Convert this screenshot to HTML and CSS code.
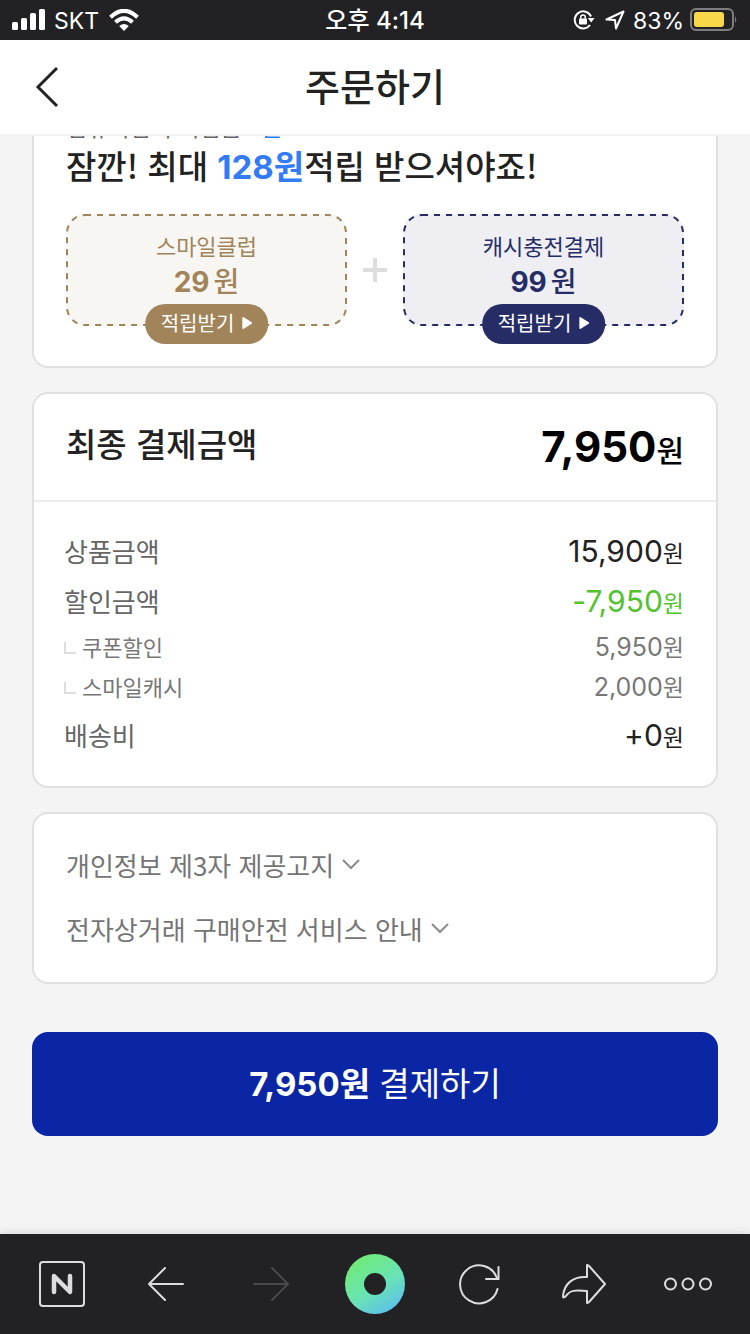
FILE: index.html
```html
<!DOCTYPE html>
<html lang="ko">
<head>
<meta charset="utf-8">
<meta name="viewport" content="width=device-width, initial-scale=1">
<title>주문하기</title>
<link rel="stylesheet" href="styles.css">
</head>
<body>
<div class="status">
  <div class="status-side">
    <svg width="34" height="22" viewBox="0 0 34 22" fill="#fff"><rect x="0" y="13" width="6" height="8" rx="1.5"/><rect x="9" y="9" width="6" height="12" rx="1.5"/><rect x="18" y="4" width="6" height="17" rx="1.5"/><rect x="27" y="0" width="6" height="21" rx="1.5"/></svg>
    <span class="carrier">SKT</span>
    <svg class="wifi" width="30" height="22" viewBox="0 0 30 22" fill="none" stroke="#fff" stroke-width="4"><path d="M1.500 8.200Q15-4.600 28.500 8.200"/><path d="M6.500 13.300Q15 5.500 23.500 13.300"/><path d="M10.200 17.100Q15 12.700 19.800 17.100L15 22Z" fill="#fff" stroke="none"/></svg>
  </div>
  <time class="clock">오후 4:14</time>
  <div class="status-side status-right">
    <svg width="22" height="20" viewBox="0 0 22 20" fill="none" stroke="#fff" stroke-width="2"><path d="M18 6.500A8.500 8.500 0 1 0 17 15"/><path d="M14.800 8h6.800l-3.400 4.600z" fill="#fff" stroke="none"/><rect x="6" y="8.500" width="8" height="6" rx="1" fill="#fff" stroke="none"/><path d="M7.700 9V7.300a2.300 2.300 0 0 1 4.600 0V9" stroke-width="1.500"/></svg>
    <svg class="locate" width="20" height="20" viewBox="0 0 20 20" fill="none" stroke="#fff" stroke-width="2" stroke-linejoin="round"><path d="M1.500 9.500L18.500 1.500L11 18.500L10 10Z"/></svg>
    <span class="percent">83%</span>
    <svg width="48" height="24" viewBox="0 0 48 24"><rect x="1" y="1" width="42" height="21" rx="5" fill="none" stroke="#7d7d80" stroke-width="2"/><rect x="4" y="4" width="30" height="15" rx="3" fill="#f8d84a"/><path d="M45 8q2.500 3.500 0 7z" fill="#7d7d80"/></svg>
  </div>
</div>
<header class="header">
  <button class="back" aria-label="뒤로"><svg width="24" height="42" viewBox="0 0 24 42" fill="none" stroke="#222" stroke-width="3"><path d="M22 2L3 21L22 40"/></svg></button>
  <h1 class="title">주문하기</h1>
</header>
<main class="content">
  <section class="card reward">
    <p class="earned">컴퓨터입니 적립금 <span class="blue">0원</span></p>
    <h2 class="headline">잠깐! 최대 <strong class="blue">128원</strong>적립 받으셔야죠!</h2>
    <div class="offers">
      <div class="offer gold">
        <svg class="dash" aria-hidden="true"><rect x="1" y="1" rx="18"/></svg>
        <p class="offer-name">스마일클럽</p>
        <p class="offer-value"><strong>29</strong>원</p>
        <button class="pill">적립받기<svg width="10" height="14" viewBox="0 0 10 14"><path d="M1 2L9 7L1 12Z" fill="#fff" stroke="#fff" stroke-width="2" stroke-linejoin="round"/></svg></button>
      </div>
      <svg class="plus" width="24" height="24" viewBox="0 0 24 24" stroke="#ddd" stroke-width="4"><path d="M12 0V24M0 12H24"/></svg>
      <div class="offer navy">
        <svg class="dash" aria-hidden="true"><rect x="1" y="1" rx="18"/></svg>
        <p class="offer-name">캐시충전결제</p>
        <p class="offer-value"><strong>99</strong>원</p>
        <button class="pill">적립받기<svg width="10" height="14" viewBox="0 0 10 14"><path d="M1 2L9 7L1 12Z" fill="#fff" stroke="#fff" stroke-width="2" stroke-linejoin="round"/></svg></button>
      </div>
    </div>
  </section>
  <section class="card">
    <div class="total">
      <h2 class="total-name">최종 결제금액</h2>
      <p class="total-value"><strong>7,950</strong>원</p>
    </div>
    <dl class="prices">
      <div class="row"><dt>상품금액</dt><dd><span class="num">15,900</span>원</dd></div>
      <div class="row green"><dt>할인금액</dt><dd><span class="num">-7,950</span>원</dd></div>
      <div class="row sub"><dt>쿠폰할인</dt><dd><span class="num">5,950</span>원</dd></div>
      <div class="row sub"><dt>스마일캐시</dt><dd><span class="num">2,000</span>원</dd></div>
      <div class="row last"><dt>배송비</dt><dd><span class="num">+0</span>원</dd></div>
    </dl>
  </section>
  <section class="card notices">
    <button class="notice">개인정보 제3자 제공고지<svg width="18" height="12" viewBox="0 0 18 12" fill="none" stroke="#8b8b8b" stroke-width="2"><path d="M1 1L9 9L17 1"/></svg></button>
    <button class="notice">전자상거래 구매안전 서비스 안내<svg width="18" height="12" viewBox="0 0 18 12" fill="none" stroke="#8b8b8b" stroke-width="2"><path d="M1 1L9 9L17 1"/></svg></button>
  </section>
  <button class="pay"><strong>7,950원</strong> 결제하기</button>
</main>
<nav class="toolbar">
  <button aria-label="네이버"><svg width="46" height="46" viewBox="0 0 46 46" fill="none" stroke="#ddd"><rect x="1" y="1" width="44" height="44" rx="3" stroke-width="2"/><path d="M15 31V15L31 31V15" stroke-width="4.500" stroke-linecap="round" stroke-linejoin="round"/></svg></button>
  <button aria-label="이전"><svg width="36" height="36" viewBox="0 0 36 36" fill="none" stroke="#ddd" stroke-width="2" stroke-linecap="round" stroke-linejoin="round"><path d="M17 2L1 18L17 34M1 18H35"/></svg></button>
  <button aria-label="다음" disabled><svg width="36" height="36" viewBox="0 0 36 36" fill="none" stroke="#49494b" stroke-width="2" stroke-linecap="round" stroke-linejoin="round"><path d="M19 2L35 18L19 34M1 18H35"/></svg></button>
  <button aria-label="홈"><svg width="60" height="60" viewBox="0 0 60 60"><defs><linearGradient id="ring" x1="0.200" y1="0" x2="0.850" y2="1"><stop offset="0" stop-color="#70ea70"/><stop offset="0.550" stop-color="#69e4b5"/><stop offset="1" stop-color="#5cb9f4"/></linearGradient></defs><circle cx="30" cy="30" r="30" fill="url(#ring)"/><circle cx="30" cy="30" r="11" fill="#222224"/></svg></button>
  <button aria-label="새로고침"><svg width="42" height="42" viewBox="0 0 42 42" fill="none" stroke="#ddd" stroke-width="2" stroke-linecap="round"><path d="M39.500 26A19 19 0 1 1 38.800 14.500L40 16"/><path d="M40.500 4V16H28"/></svg></button>
  <button aria-label="공유"><svg width="44" height="40" viewBox="0 0 44 40" fill="none" stroke="#ddd" stroke-width="2" stroke-linejoin="round"><path d="M25 13V1Q26.500 1 27.500 2.500L43 20L27.500 37.500Q26.500 39 25 39V27C13 26 8 26 4 32Q1 35 1 32C2 20 11 12 25 13Z"/></svg></button>
  <button aria-label="더보기"><svg width="48" height="14" viewBox="0 0 48 14" fill="none" stroke="#ddd" stroke-width="2"><circle cx="6.500" cy="7" r="5.500"/><circle cx="24" cy="7" r="5.500"/><circle cx="41.500" cy="7" r="5.500"/></svg></button>
</nav>
</body>
</html>
```
FILE: styles.css
```css
* { box-sizing: border-box; margin: 0; padding: 0; }
body {
  min-height: 100vh;
  display: flex;
  flex-direction: column;
  background: #f4f4f4;
  color: #222;
  font-family: "Noto Sans CJK KR", sans-serif;
}
button { font: inherit; color: inherit; background: none; border: 0; }
svg { display: block; flex: none; }

.status {
  height: 40px;
  flex: none;
  display: grid;
  grid-template-columns: 1fr auto 1fr;
  align-items: center;
  padding: 0 12px;
  background: #222224;
  color: #fff;
}
.status-side { display: flex; align-items: center; gap: 8px; }
.wifi { margin-left: 2px; }
.status-right { justify-content: flex-end; gap: 6px; }
.locate { margin-left: 4px; }
.carrier, .percent { padding-top: 2px; font: 23px/38px Inter, sans-serif; }
.percent { margin-left: 2px; }
.clock { padding-top: 2px; font: 500 24px/38px Inter, "Noto Sans CJK KR", sans-serif; }

.header {
  position: relative;
  z-index: 1;
  flex: none;
  height: 96px;
  display: grid;
  grid-template-columns: 1fr auto 1fr;
  align-items: center;
  padding: 0 35px;
  background: #fff;
  border-bottom: 2px solid #f2f2f2;
}
.back { justify-self: start; }
.title { padding-bottom: 4px; font-size: 38px; line-height: 56px; font-weight: 500; }

.content { flex: 1; display: flex; flex-direction: column; gap: 24px; padding: 0 32px; }
.card { background: #fff; border: 2px solid #e0e0e0; border-radius: 16px; }

.reward { margin-top: -26px; padding: 0 32px 40px; border-top: 0; border-radius: 0 0 16px 16px; }
.earned { font-size: 23px; line-height: 32px; color: #666; }
.headline { font-size: 33px; line-height: 46px; font-weight: 500; }
.blue { color: #347cf7; }
.headline .blue, .offer-value strong, .pay strong { font-family: Inter, "Noto Sans CJK KR", sans-serif; font-weight: 700; line-height: 1; }
.offers { display: flex; align-items: center; gap: 16px; margin-top: 26px; }
.offer {
  position: relative;
  flex: 1;
  height: 112px;
  padding-top: 14px;
  border-radius: 18px;
  text-align: center;
}
.dash { position: absolute; inset: 0; width: 100%; height: 100%; }
.dash rect { width: calc(100% - 2px); height: calc(100% - 2px); fill: none; stroke: currentColor; stroke-width: 2; stroke-dasharray: 6 6; }
.gold { background: #f7f6f2; color: #a18459; }
.navy { background: #eeeef3; color: #262d66; }
.offer-name { font-size: 22px; line-height: 34px; }
.offer-value { font-size: 28px; line-height: 36px; font-weight: 500; }
.offer-value strong { margin-right: 4px; }
.pill {
  position: absolute;
  left: 50%;
  bottom: -18px;
  transform: translateX(-50%);
  display: flex;
  align-items: center;
  gap: 8px;
  height: 40px;
  padding: 0 16px 2px;
  border-radius: 20px;
  color: #fff;
  font-size: 20px;
  line-height: 38px;
  white-space: nowrap;
}
.gold .pill { background: #a18459; }
.navy .pill { background: #262d66; }

.total {
  display: flex;
  justify-content: space-between;
  align-items: flex-start;
  padding: 28px 32px 24px;
  border-bottom: 2px solid #ececec;
}
.total-name { font-size: 33px; line-height: 42px; font-weight: 500; }
.total-value { font-size: 30px; line-height: 54px; font-weight: 500; color: #000; }
.total-value strong { font: 700 42px/1 Inter, sans-serif; }
.prices { padding: 24px 32px 25px; }
.row { display: flex; justify-content: space-between; align-items: baseline; font-size: 26px; line-height: 50px; }
.row dt { color: #666; margin-left: -2px; }
.row dd { font-size: 23px; }
.num { font-family: Inter, sans-serif; font-size: 30px; line-height: 1; }
.green { line-height: 48px; }
.green dd { color: #52c22f; }
.sub { font-size: 22px; line-height: 40px; }
.sub dt, .sub dd { color: #777; }
.sub dt::before { content: ""; display: inline-block; width: 10px; height: 10px; margin-right: 6px; vertical-align: 2px; border: solid #ddd; border-width: 0 0 2px 2px; }
.sub .num { font-size: 25px; }
.last { margin-top: 4px; }

.notices { display: flex; flex-direction: column; align-items: flex-start; gap: 24px; padding: 31px 32px 33px; }
.notice { display: flex; align-items: center; gap: 8px; font-size: 26px; line-height: 40px; color: #757575; }

.pay {
  margin-top: 24px;
  height: 104px;
  padding-bottom: 4px;
  border-radius: 16px;
  background: #0b26a5;
  color: #fff;
  font-size: 33px;
  line-height: 48px;
}
.toolbar {
  flex: none;
  height: 100px;
  display: flex;
  align-items: center;
  padding: 0 10px;
  background: #222224;
  box-shadow: 0 0 10px rgba(0, 0, 0, 0.15);
}
.toolbar button { flex: 1; display: flex; justify-content: center; }
```
